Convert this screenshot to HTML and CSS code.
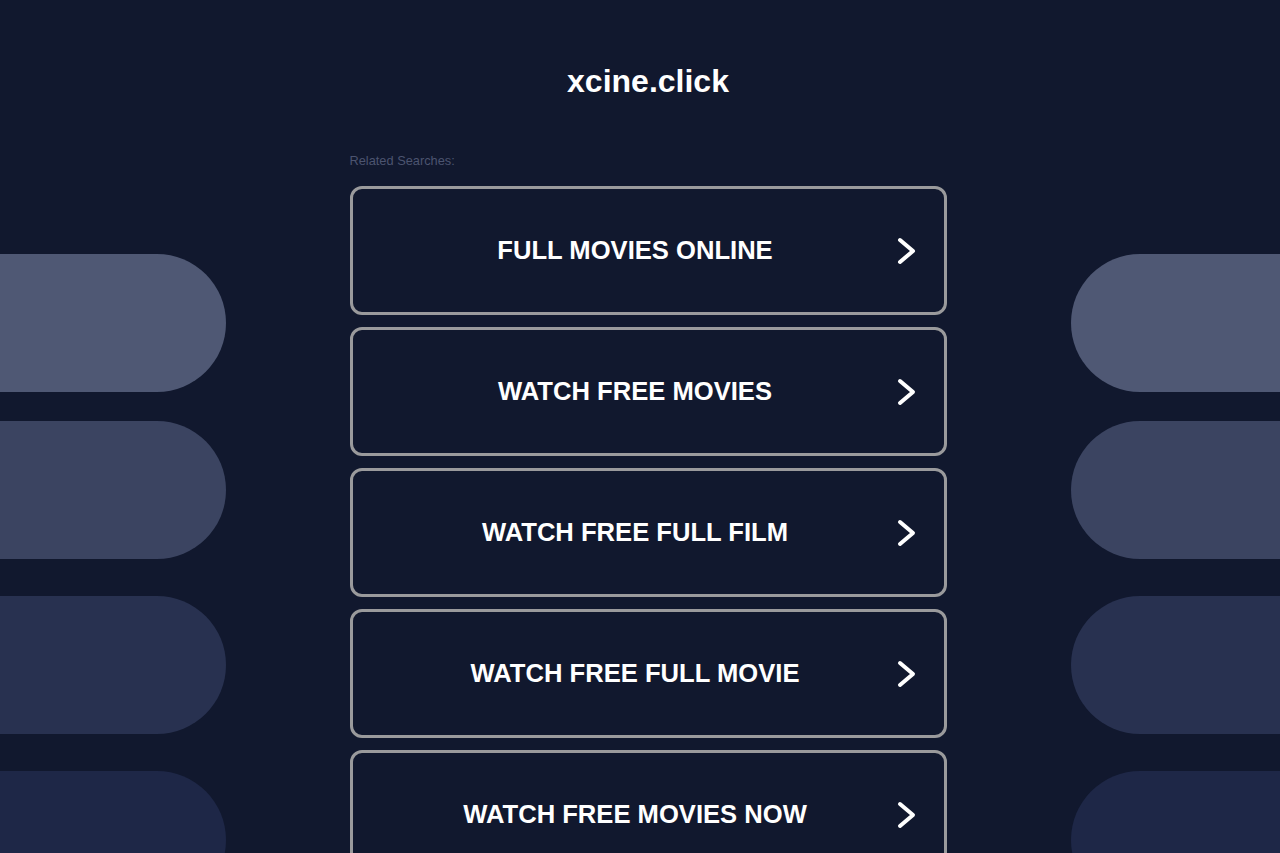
FILE: index.html
```html
<!DOCTYPE html>
<html lang="en">
<head>
	<meta charset="UTF-8">
	<title>xcine.click</title>
	<link rel="stylesheet" href="styles.css">
</head>
<body>
<div class="deco deco-left">
	<div class="pill p1"></div>
	<div class="pill p2"></div>
	<div class="pill p3"></div>
	<div class="pill p4"></div>
</div>
<div class="deco deco-right">
	<div class="pill p1"></div>
	<div class="pill p2"></div>
	<div class="pill p3"></div>
	<div class="pill p4"></div>
</div>
<div class="page">
	<h1 class="domain">xcine.click</h1>
	<div class="related">
		<p class="label">Related Searches:</p>
		<a class="search" href="#">
			<span>FULL MOVIES ONLINE</span>
			<svg class="arrow" viewBox="0 0 20 28"><path d="M3 3 L16 14 L3 25"/></svg>
		</a>
		<a class="search" href="#">
			<span>WATCH FREE MOVIES</span>
			<svg class="arrow" viewBox="0 0 20 28"><path d="M3 3 L16 14 L3 25"/></svg>
		</a>
		<a class="search" href="#">
			<span>WATCH FREE FULL FILM</span>
			<svg class="arrow" viewBox="0 0 20 28"><path d="M3 3 L16 14 L3 25"/></svg>
		</a>
		<a class="search" href="#">
			<span>WATCH FREE FULL MOVIE</span>
			<svg class="arrow" viewBox="0 0 20 28"><path d="M3 3 L16 14 L3 25"/></svg>
		</a>
		<a class="search" href="#">
			<span>WATCH FREE MOVIES NOW</span>
			<svg class="arrow" viewBox="0 0 20 28"><path d="M3 3 L16 14 L3 25"/></svg>
		</a>
	</div>
</div>
</body>
</html>
```

FILE: styles.css
```css
html, body{
	margin: 0;
	height: 100%;
	overflow: hidden;
}
body{
	background-color: #11182e;
	font-family: "Liberation Sans", Arial, sans-serif;
	position: relative;
}

/* background pills */
.deco{
	position: absolute;
	top: 254px;
	width: 226px;
	display: flex;
	flex-direction: column;
}
.deco-left{
	left: 0;
}
.deco-right{
	right: 0;
	width: 209px;
}
.pill{
	height: 138px;
	flex: none;
}
.deco-left .pill{
	border-radius: 0 69px 69px 0;
}
.deco-right .pill{
	border-radius: 69px 0 0 69px;
}
.p1{ background-color: #4f5874; }
.p2{ background-color: #3b4461; margin-top: 29px; }
.p3{ background-color: #283150; margin-top: 37px; }
.p4{ background-color: #1e2747; margin-top: 37px; }

.page{
	position: relative;
	width: 597px;
	margin: 0 auto;
	padding-top: 62px;
	transform: translateX(8px);
}
.domain{
	margin: 0;
	text-align: center;
	color: #ffffff;
	font-size: 32px;
	font-weight: bold;
	line-height: 38px;
}
.related{
	display: flex;
	flex-direction: column;
	gap: 12px;
	margin-top: 54px;
}
.label{
	margin: 0 0 6px;
	color: #4c5470;
	font-size: 12.8px;
	line-height: 14px;
}
.search{
	display: flex;
	align-items: center;
	justify-content: center;
	position: relative;
	height: 123px;
	border: 3px solid #9a9a9c;
	border-radius: 12px;
	color: #ffffff;
	text-decoration: none;
	font-size: 25.6px;
	font-weight: bold;
	padding-right: 26px;
}
.arrow{
	position: absolute;
	right: 27px;
	top: 50%;
	width: 20px;
	height: 28px;
	margin-top: -14px;
	fill: none;
	stroke: #ffffff;
	stroke-width: 4;
	stroke-linecap: round;
	stroke-linejoin: round;
}
```
